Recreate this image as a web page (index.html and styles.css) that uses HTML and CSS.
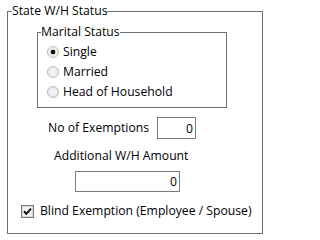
FILE: index.html
```html
<!DOCTYPE html>
<html lang="en">
<head>
<meta charset="utf-8">
<title>State W/H Status</title>
<link rel="stylesheet" href="styles.css">
</head>
<body>
<fieldset class="outer">
  <legend class="outer-legend">State W/H Status</legend>
  <fieldset class="inner">
    <legend class="inner-legend">Marital Status</legend>
    <label class="radio-row"><input type="radio" name="ms" checked><span>Single</span></label>
    <label class="radio-row"><input type="radio" name="ms"><span>Married</span></label>
    <label class="radio-row"><input type="radio" name="ms"><span>Head of Household</span></label>
  </fieldset>
  <div class="exempt-row">
    <label class="field-label">No of Exemptions</label>
    <input class="num num-exempt" type="text" value="0">
  </div>
  <div class="field-label add-label">Additional W/H Amount</div>
  <input class="num num-amount" type="text" value="0">
  <label class="check-row">
    <span class="check-box"><svg width="13" height="13" viewBox="0 0 13 13"><rect x="0.5" y="0.5" width="12" height="12" fill="#f3f3f3" stroke="#7a7a7a"/><rect x="1.5" y="1.5" width="10" height="10" fill="none" stroke="#dcdcdc"/><polyline points="3,6.2 5.4,8.8 10,3.6" fill="none" stroke="#111" stroke-width="2"/></svg></span>
    <span>Blind Exemption (Employee / Spouse)</span>
  </label>
</fieldset>
</body>
</html>
```

FILE: styles.css
```css
html, body {
  margin: 0;
  padding: 0;
  background: #ffffff;
}

body {
  font-family: "Open Sans", "Noto Sans", sans-serif;
  font-size: 12.2px;
  line-height: 16px;
  color: #000;
}

.outer {
  box-sizing: border-box;
  width: 256px;
  margin: 3px 0 0 7px;
  padding: 0 0 14px 0;
  border: 1px solid #6e6e6e;
  min-inline-size: 0;
}

.outer-legend {
  padding: 0;
  margin-left: 4px;
  line-height: 16px;
}

.inner {
  box-sizing: border-box;
  width: 190px;
  margin: 5px 0 0 29px;
  padding: 2px 0 5px 0;
  border: 1px solid #6e6e6e;
  min-inline-size: 0;
}

.inner-legend {
  padding: 0;
  margin-left: 3px;
  line-height: 16px;
}

.radio-row {
  display: flex;
  align-items: center;
  height: 20px;
  padding-left: 9px;
  gap: 4px;
}

.radio-row input {
  appearance: none;
  -webkit-appearance: none;
  box-sizing: border-box;
  width: 12px;
  height: 12px;
  margin: 0;
  border: 1px solid #b8b8b8;
  border-radius: 50%;
  background: radial-gradient(circle, #f6f6f6 0, #e6e6e6 100%);
}

.radio-row input:checked {
  background: radial-gradient(circle, #111 0, #111 2px, #d8d8d8 2.6px, #f2f2f2 4px);
}

.exempt-row {
  display: flex;
  align-items: center;
  justify-content: space-between;
  width: 148px;
  margin: 9px 0 0 40px;
}

.num {
  box-sizing: border-box;
  margin: 0;
  padding: 0 2px 0 0;
  border: 1px solid #7a7a7a;
  border-radius: 0;
  background: #fff;
  font-family: "Open Sans", "Noto Sans", sans-serif;
  font-size: 12.2px;
  text-align: right;
  color: #000;
  outline: none;
}

.num-exempt {
  width: 39px;
  height: 22px;
}

.add-label {
  margin: 9px 0 0 46px;
}

.num-amount {
  display: block;
  width: 105px;
  height: 21px;
  margin: 7px 0 0 67px;
}

.check-row {
  display: flex;
  align-items: center;
  height: 16px;
  margin: 11px 0 0 13px;
  gap: 6px;
}

.check-box {
  display: block;
  width: 13px;
  height: 13px;
}

.check-box svg {
  display: block;
}
```
